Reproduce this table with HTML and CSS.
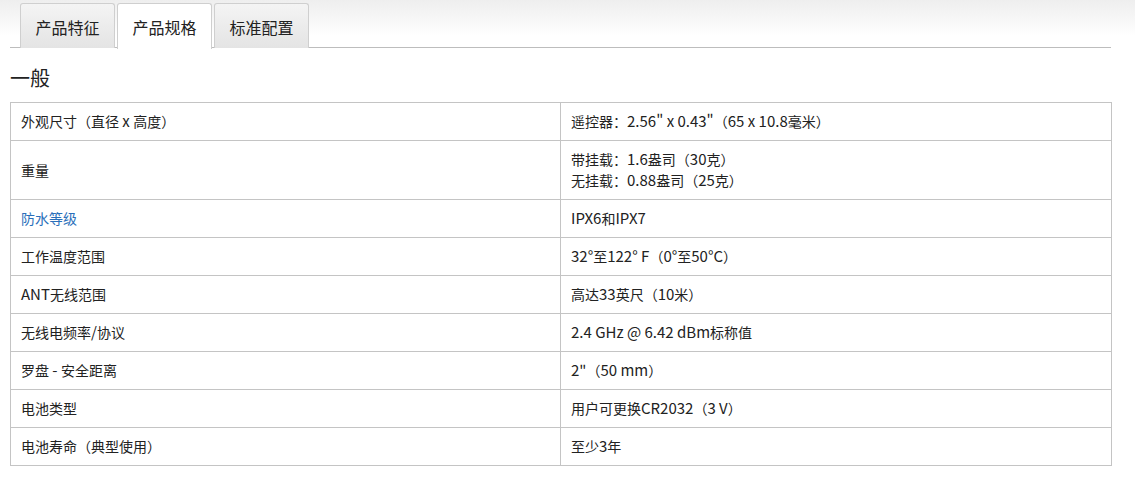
FILE: index.html
```html
<!DOCTYPE html>
<html lang="zh">
<head>
<meta charset="utf-8">
<link rel="stylesheet" href="styles.css">
</head>
<body>
<div class="page">
  <div class="tabbar">
    <div class="tabs">
      <div class="tab">产品特征</div>
      <div class="tab active">产品规格</div>
      <div class="tab">标准配置</div>
    </div>
  </div>
  <div class="content">
    <h2 class="title">一般</h2>
    <table class="spec">
      <tr><td>外观尺寸（直径<span class="en"> x </span>高度）</td><td>遥控器：<span class="en">2.56" x 0.43"</span>（<span class="en">65 x 10.8</span>毫米）</td></tr>
      <tr><td>重量</td><td>带挂载：<span class="en">1.6</span>盎司（<span class="en">30</span>克）<br>无挂载：<span class="en">0.88</span>盎司（<span class="en">25</span>克）</td></tr>
      <tr><td><a class="link">防水等级</a></td><td><span class="en">IPX6</span>和<span class="en">IPX7</span></td></tr>
      <tr><td>工作温度范围</td><td><span class="en">32°</span>至<span class="en">122° F</span>（<span class="en">0°</span>至<span class="en">50°C</span>）</td></tr>
      <tr><td><span class="en">ANT</span>无线范围</td><td>高达<span class="en">33</span>英尺（<span class="en">10</span>米）</td></tr>
      <tr><td>无线电频率<span class="en">/</span>协议</td><td><span class="en">2.4 GHz @ 6.42 dBm</span>标称值</td></tr>
      <tr><td>罗盘<span class="en"> - </span>安全距离</td><td><span class="en">2"</span>（<span class="en">50 mm</span>）</td></tr>
      <tr><td>电池类型</td><td>用户可更换<span class="en">CR2032</span>（<span class="en">3 V</span>）</td></tr>
      <tr><td>电池寿命（典型使用）</td><td>至少<span class="en">3</span>年</td></tr>
    </table>
  </div>
</div>
</body>
</html>
```
FILE: styles.css
```css
html, body {
  margin: 0;
  padding: 0;
  background: #fff;
}
body {
  font-family: "Noto Sans CJK SC", "Noto Sans", sans-serif;
  font-size: 14px;
  color: #222;
}
.page {
  width: 1135px;
}
.tabbar {
  background: linear-gradient(#eeeeee 0px, #ffffff 36px);
  padding: 3px 0 0 10px;
}
.tabs {
  display: flex;
  gap: 2px;
  width: 1101px;
  padding-left: 10px;
  box-sizing: border-box;
  border-bottom: 1px solid #bdbdbd;
  height: 45px;
}
.tab {
  width: 95px;
  height: 45px;
  box-sizing: border-box;
  border: 1px solid #cfcfcf;
  border-bottom: none;
  border-radius: 3px 3px 0 0;
  background: linear-gradient(#f4f4f4, #e4e4e4);
  font-size: 16px;
  color: #222;
  display: flex;
  align-items: center;
  justify-content: center;
  padding-top: 1px;
}
.tab.active {
  background: #fff;
  height: 46px;
  margin-bottom: -1px;
}
.content {
  padding: 0 24px 0 10px;
}
.title {
  margin: 0;
  font-size: 20px;
  font-weight: normal;
  line-height: 28px;
  padding: 16px 0 10px;
  color: #222;
}
.spec {
  width: 1102px;
  border-collapse: collapse;
  table-layout: fixed;
}
.spec td {
  border: 1px solid #c4c4c4;
  padding: 8px 10px;
  line-height: 21px;
  vertical-align: middle;
}
.spec td:first-child {
  width: 550px;
  box-sizing: border-box;
}
.en {
  font-size: 15px;
  line-height: 1;
}
.link {
  color: #2a6fba;
}
```
